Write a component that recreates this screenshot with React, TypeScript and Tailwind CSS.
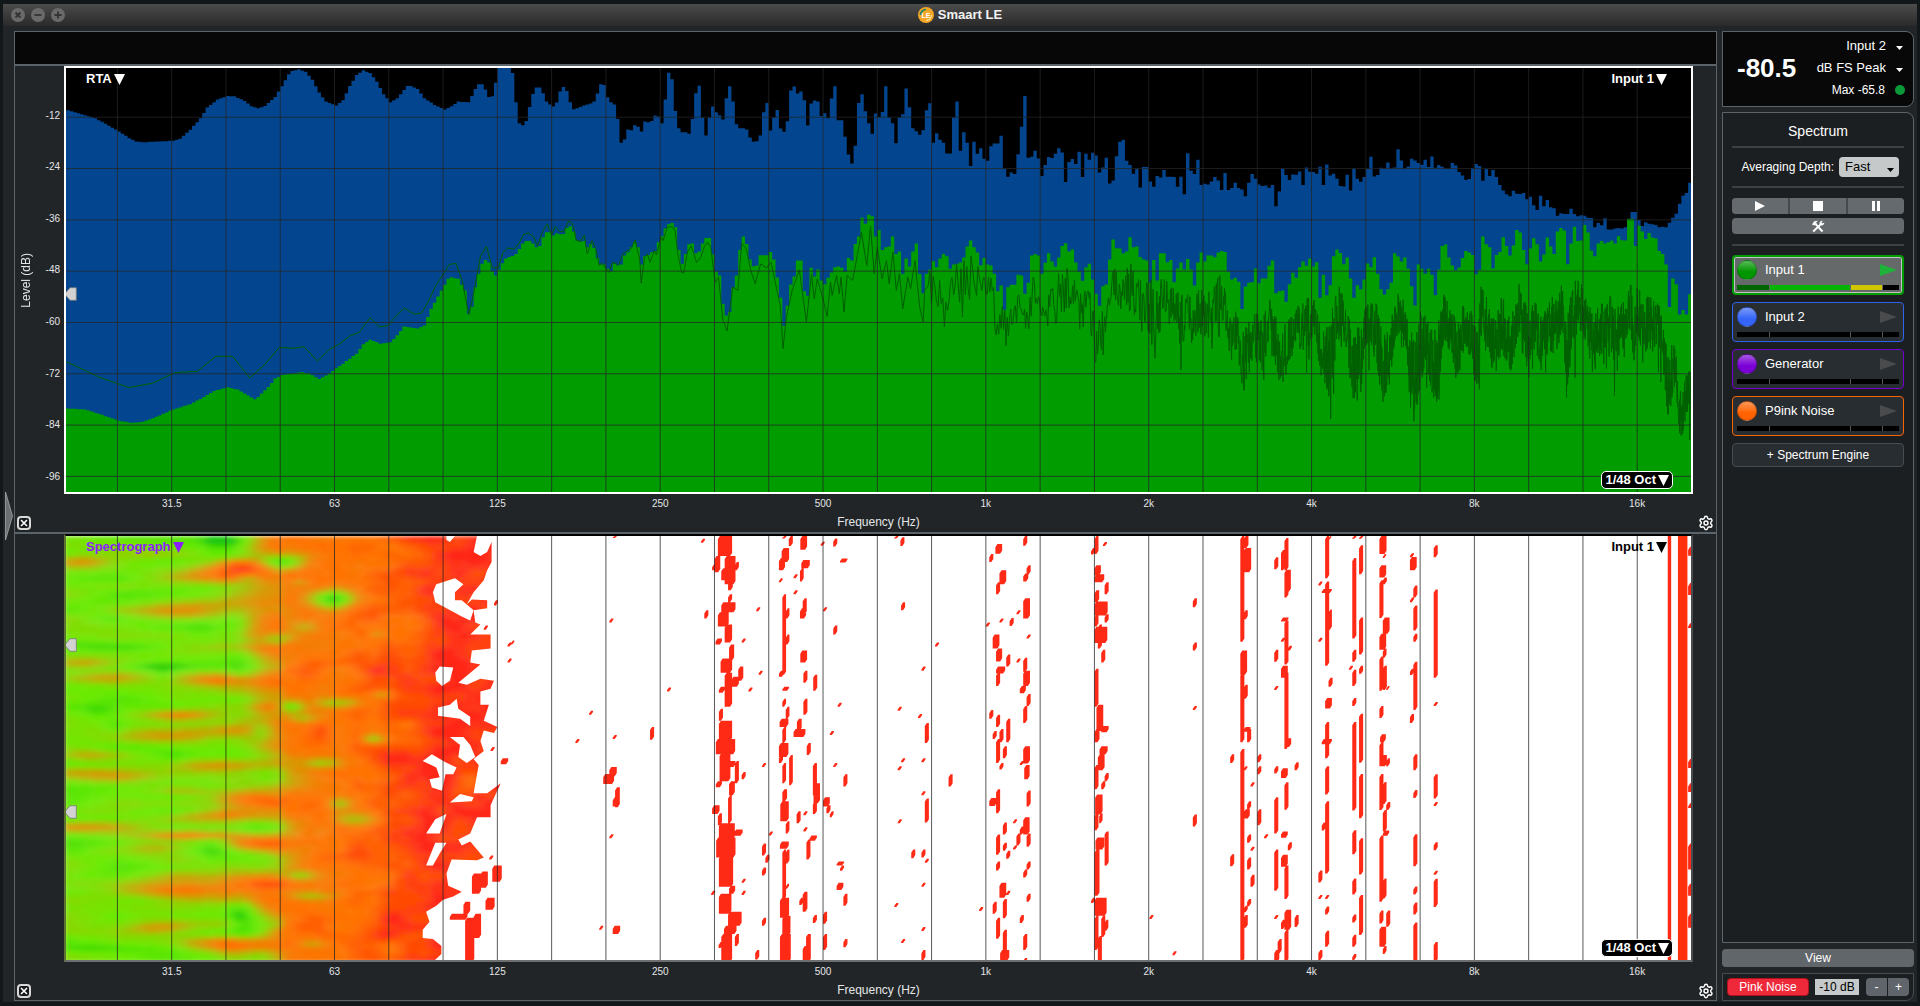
import { useMemo } from "react";
import type { ReactNode } from "react";
import { Settings } from "lucide-react";

// One column is 1/48 octave wide, both plots span the same columns
const COLS = 479;
const ROWS = 105.5;
const LEVEL_TOP = 21;
const LEVEL_SPAN = 1275;

const FREQ_LABELS = ["31.5", "63", "125", "250", "500", "1k", "2k", "4k", "8k", "16k"];
const LEVEL_LABELS = ["-12", "-24", "-36", "-48", "-60", "-72", "-84", "-96"];
const GRID_COLS = Array.from({ length: 29 }, (_, i) => 15 + 16 * i);
const GRID_LEVELS = Array.from({ length: 8 }, (_, i) => 169 + 154.3 * i);

type Point = [number, number];

const PEAK_CURVE: Point[] = [
  [0, 148], [8, 172], [15, 212], [18, 232], [20, 242], [22, 244], [31, 240], [33, 234], [36, 207], [39, 172],
  [41, 140], [44, 116], [47, 105], [49, 106], [52, 120], [54, 136], [56, 142], [58, 135], [61, 108], [63, 76],
  [65, 40], [66, 30], [68, 25], [70, 32], [72, 56], [74, 95], [76, 122], [79, 134], [81, 118], [83, 75],
  [85, 42], [87, 28], [89, 36], [91, 62], [93, 100], [95, 124], [97, 112], [100, 75], [101, 75], [103, 84],
  [105, 112], [108, 132], [111, 146], [113, 136], [115, 122], [118, 124], [119, 105], [120, 84], [121, 70],
  [122, 70], [123, 86], [124, 108], [125, 106], [126, 65],
];

const PEAK_BARS: number[][] = [
  [127, 15, 15, 15, 15, 36, 124, 187, 193, 180, 138, 99, 80, 80, 97, 122, 131, 137, 125, 92, 78, 90, 124, 145, 142, 138, 134, 131, 128, 122, 98, 70, 72, 109, 124, 131, 174, 246, 236, 206, 208, 193, 198],
  [169, 212, 182, 184, 180, 164, 167, 187, 116, 35, 55, 150, 202, 214, 214, 219, 174, 97, 74, 170, 224, 170],
  [190, 137, 154, 163, 176, 112, 76, 122, 190, 202, 202, 206, 230, 243, 241, 224, 154, 126, 209, 170, 147, 203],
  [211, 213, 181, 89, 77, 98, 92, 118, 194, 128, 119, 122, 165, 157, 172, 113, 76, 178, 178, 228, 281, 308],
  [232, 255, 126, 100, 151, 187, 219, 158, 168, 153, 76, 170, 187, 247, 170, 160, 83, 139, 202, 211, 222, 208],
  [253, 148, 127, 246, 217, 237, 246, 278, 278, 170, 122, 270, 214, 246, 316, 243, 279, 262, 294, 300, 256, 248, 248],
  [275, 225, 324, 348, 335, 340, 280, 198, 105, 291, 288, 270, 293, 346, 313, 289, 292, 279, 262, 275, 364, 304],
  [296, 295, 310, 273, 349, 279, 297, 276, 284, 335, 320, 291, 368, 359, 286, 243, 237, 300, 313, 339, 324, 380],
  [317, 319, 319, 362, 378, 346, 350, 328, 348, 348, 349, 378, 348, 401, 277, 330, 340, 297],
  [334, 373, 369, 371, 362, 349, 359, 388, 337, 388, 382, 366, 382, 386, 407, 366, 340, 354, 371, 376, 374],
  [354, 381, 373, 437, 392, 323, 343, 358, 341, 342, 332, 373, 320, 333, 334, 339, 318, 373, 311, 344, 339],
  [374, 354, 376, 377, 342, 389, 323, 354, 363, 349, 325, 288, 347, 343, 321, 323, 305, 323, 320, 265, 299],
  [394, 323, 317, 294, 299, 307, 312, 297, 319, 287, 321, 313, 318, 324, 325, 307, 314, 334, 344, 358, 355],
  [414, 322, 310, 316, 360, 325, 346, 328, 349, 373, 389, 401, 407, 390, 399, 400, 397, 416, 408, 434, 448],
  [434, 405, 437, 418, 440, 443, 465, 458, 460, 460, 444, 460, 467, 464, 465, 471, 472, 500, 487, 494, 473],
  [454, 507, 507, 504, 502, 504, 500, 480, 454, 454, 478, 496, 485, 489, 491, 493, 500, 498, 500, 486, 471],
  [474, 459, 429, 405, 397, 366],
];

const LIVE_CURVE: Point[] = [
  [0, 1045], [5, 1048], [10, 1064], [15, 1082], [19, 1088], [22, 1085], [26, 1070], [31, 1048], [36, 1032],
  [39, 1016], [43, 992], [47, 981], [50, 988], [53, 1006], [55, 1017], [56, 1010], [59, 980], [61, 955],
  [63, 944], [69, 936], [71, 940], [74, 956], [76, 946], [80, 917], [85, 880], [87, 852], [89, 838], [92, 850],
  [95, 846], [97, 825], [99, 798], [103, 804], [105, 795], [107, 745], [110, 690], [112, 655], [113, 650],
  [115, 655], [117, 690], [118, 760],
];

const LIVE_BARS: number[][] = [
  [119, 740, 680, 640, 610, 598, 606, 632, 645, 628, 608, 594, 589, 586, 580, 565, 549, 541, 541, 549, 560, 556, 530, 515, 515, 525],
  [144, 518, 521, 520, 502, 497, 513, 540, 543, 541, 560, 550, 562, 592, 612, 612, 625, 632, 610, 615, 612, 585, 575, 560, 545, 560],
  [169, 612, 586, 583, 575, 572, 545, 527, 504, 491, 487, 500, 568, 610, 580, 551, 549, 578, 573, 549, 532, 532],
  [190, 582, 633, 645, 731, 765, 755, 681, 645, 568, 528, 550, 597, 617, 615, 584, 584, 584, 574, 597, 651, 712],
  [211, 796, 736, 672, 648, 600, 600, 692, 706, 622, 648, 627, 660, 671, 652, 636, 620, 618, 622, 634, 592, 600],
  [232, 550, 528, 471, 489, 462, 467, 528, 508, 568, 560, 558, 528, 580, 573, 640, 594, 618, 573, 549, 640, 698],
  [253, 640, 627, 602, 620, 594, 580, 587, 625, 612, 610, 606, 591, 558, 540, 560, 576, 614, 592, 612, 615, 640, 692],
  [275, 675, 748, 680, 673, 673, 643, 645, 700, 667, 585, 580, 585, 640, 607, 578, 603, 618, 591, 556, 548, 573],
  [296, 567, 606, 633, 661, 621, 610, 657, 700, 736, 677, 672, 597, 537, 563, 564, 578, 573, 530, 560, 558, 589],
  [317, 597, 600, 667, 598, 660, 578, 578, 605, 598, 665, 624, 606, 627, 595, 627, 675, 606],
  [334, 576, 603, 585, 585, 590, 576, 571, 574, 633, 657, 652, 664, 746, 678, 667, 665, 624, 668, 654, 654],
  [354, 616, 600, 698, 692, 690, 724, 671, 637, 652, 620, 603, 616, 594, 618, 605, 712, 643, 704, 674, 587],
  [374, 567, 577, 611, 591, 654, 712, 674, 686, 657, 609, 620, 590, 640, 686, 702, 686, 667, 578, 588, 603],
  [394, 591, 625, 677, 735, 612, 625, 640, 625, 643, 704, 627, 556, 552, 591, 615, 629, 621, 592, 571, 576],
  [414, 583, 641, 628, 528, 551, 560, 624, 583, 574, 530, 556, 585, 555, 508, 516, 568, 611, 564, 533, 551],
  [434, 603, 582, 531, 558, 580, 513, 502, 510, 611, 549, 498, 541, 540, 493, 516, 570, 587, 549, 541, 549],
  [454, 545, 540, 549, 527, 539, 540, 474, 474, 556, 495, 513, 535, 517, 531, 534, 571, 580, 612, 740, 654],
  [474, 671, 762, 749, 762, 701],
];

const FFT_CURVE: Point[] = [
  [0, 905], [1, 909], [9.5, 950], [18.4, 982], [25.3, 969], [32, 937], [38.6, 933], [44, 888], [49, 888], [54, 953],
  [58.5, 912], [62.7, 861], [66.7, 864], [70, 859], [74, 902], [77.6, 866], [80.3, 852], [83.6, 826], [86.3, 816],
  [89.5, 772], [92.2, 799], [94.8, 796], [97, 768], [99.6, 743], [102.4, 761], [104.5, 759], [106.3, 730],
  [108.8, 676], [111.4, 635], [112.8, 612], [114.8, 608], [116.6, 660], [118.6, 763], [120, 700], [122, 588],
  [123.8, 557], [125.5, 622], [127.3, 622], [128.6, 577], [130.1, 562], [131.9, 566], [133.4, 548], [134.7, 522],
  [136.1, 517], [137.7, 528], [138.8, 557], [140.4, 512], [141.7, 490], [143, 523], [144, 498], [145.4, 512],
  [146.6, 514], [148, 481], [149.2, 490], [150.3, 540], [151.5, 542], [152.6, 524], [153.5, 580], [154.9, 540],
  [156, 565], [157, 614], [157.9, 608], [159.9, 636], [161, 605], [162.8, 613], [164, 580], [166.4, 565],
  [167.6, 538], [169, 600], [169.4, 668], [170.4, 590], [171.2, 580], [172, 605], [173.3, 570], [173.9, 583],
  [175.2, 530], [175.9, 540], [177, 500], [178.5, 498], [179.4, 510], [180.2, 580], [181.3, 636], [182, 636],
  [183, 575], [184.2, 556], [185.7, 606], [187, 590], [188, 558], [189, 546], [189.9, 560], [191.2, 666],
  [192.2, 650], [193.5, 780], [194.7, 812], [196.4, 680], [197.9, 690], [199, 548], [200.4, 565], [201.7, 630],
  [203, 670], [204.6, 610], [206.3, 622], [207.7, 605], [208.9, 665], [210.4, 735], [211.2, 865], [212.2, 770],
  [213.9, 690], [216, 628], [218.1, 785], [219.6, 640], [220.4, 715], [221.3, 655], [223, 715], [224.2, 768],
  [225.2, 665], [225.7, 705], [227, 645], [227.8, 700], [228.3, 650], [229.2, 755], [230.1, 645], [231.7, 660],
  [233, 590], [234.3, 515], [235.9, 615], [237, 497], [238.1, 640], [239, 560], [240.4, 655], [241.7, 600],
  [242.5, 670], [243.6, 575], [244.6, 690], [245.5, 640], [246.5, 745], [248, 650], [248.8, 685], [250.1, 600],
  [251.5, 740], [252.5, 785],
];

// column, upper and lower bound of the raw FFT trace
const FFT_RANGE: [number, number, number][] = [
  [253.5, 640, 700], [255, 630, 720], [260, 640, 740], [264, 590, 760], [266, 570, 700], [268, 600, 720],
  [271, 620, 780], [274, 690, 810], [276, 740, 860], [279, 750, 820], [281, 700, 790], [283, 730, 860],
  [285, 650, 720], [287, 660, 780], [289, 660, 780], [291, 680, 800], [294, 615, 740], [296, 650, 740],
  [299, 700, 800], [301, 680, 800], [303, 760, 900], [306, 740, 900], [308, 630, 700], [311, 640, 740],
  [314, 620, 740], [316, 660, 780], [319, 660, 830], [321, 680, 880], [323, 660, 760], [326, 690, 790],
  [329, 720, 880], [330, 680, 800], [332, 740, 850], [335, 670, 800], [338, 680, 870], [340, 660, 810],
  [342, 700, 800], [343, 760, 890], [345, 760, 860], [347, 830, 1000], [349, 760, 900], [351, 770, 890],
  [353, 770, 900], [355, 720, 820], [357, 800, 950], [359, 800, 950], [362, 760, 860], [365, 720, 860],
  [368, 730, 830], [370, 830, 950], [372, 800, 1000], [375, 690, 840], [377, 740, 850], [379, 820, 1000],
  [381, 810, 1020], [383, 740, 850], [386, 740, 880], [388, 830, 1010], [390, 820, 950], [392, 700, 820],
  [395, 740, 870], [397, 830, 1100], [399, 760, 950], [401, 790, 930], [404, 830, 1020], [406, 700, 820],
  [408, 760, 880], [410, 800, 960], [412, 730, 850], [414, 750, 880], [416, 820, 1000], [417, 680, 820],
  [419, 730, 860], [421, 790, 960], [423, 720, 860], [426, 780, 920], [428, 670, 820], [431, 780, 940],
  [432, 710, 830], [435, 790, 930], [437, 720, 850], [439, 730, 870], [441, 680, 800], [442, 800, 1000],
  [444, 680, 830], [447, 670, 800], [450, 790, 930], [452, 740, 870], [455, 720, 850], [456, 760, 900],
  [459, 730, 850], [461, 670, 790], [462, 780, 900], [463, 680, 820], [465, 740, 860], [467, 710, 850],
  [470, 760, 880], [471, 810, 960], [472, 900, 1070], [474, 840, 960], [475, 950, 1080], [476, 1000, 1130],
  [478, 930, 1040],
];

function lerpAt(points: number[][], x: number, field = 1) {
  let i = 0;
  while (i < points.length - 2 && points[i + 1][0] < x) i++;
  const a = points[i];
  const b = points[i + 1];
  const t = Math.min(1, Math.max(0, (x - a[0]) / (b[0] - a[0])));
  return a[field] + (b[field] - a[field]) * t;
}

function noise(n: number) {
  const s = Math.sin(n * 127.1 + 11.7) * 43758.5453;
  return s - Math.floor(s);
}

function barsPath(curve: Point[], chunks: number[][]) {
  const values: number[] = [];
  const last = curve[curve.length - 1][0];
  for (let k = 0; k <= last; k++) values[k] = Math.round(lerpAt(curve, k));
  chunks.forEach(([start, ...list]) => list.forEach((v, i) => (values[start + i] = v)));
  let d = `M-1 1300V${values[0]}`;
  for (let k = 0; k < COLS; k++) d += `V${values[k]}H${k + 1}`;
  return d + "V1300Z";
}

function fftPath() {
  let d = FFT_CURVE.map(([x, y], i) => `${i ? "L" : "M"}${x} ${y}`).join("");
  let x = 253;
  let n = 0;
  while (x < COLS) {
    const top = lerpAt(FFT_RANGE, x, 1);
    const range = lerpAt(FFT_RANGE, x, 2) - top;
    // a few bins drop well below the rest
    const dip = noise(n + 900) > 0.965 ? range * 0.9 * noise(n + 400) : 0;
    d += `L${x.toFixed(2)} ${Math.round(top - range * 0.12 + range * 1.25 * noise(n) + dip)}`;
    x += Math.max(0.07, 0.5 * Math.pow(2, (253 - x) / 48));
    n++;
  }
  return d;
}

// ---- spectrograph ----

const HEAT_BASE: Point[] = [
  [0, 0.26], [25, 0.25], [42, 0.3], [50, 0.46], [57, 0.62], [65, 0.73], [80, 0.76], [92, 0.82], [100, 0.9],
  [108, 0.98], [128, 0.97],
];

const HEAT_COLORS: number[][] = [
  [0, 30, 200, 10], [0.15, 84, 228, 0], [0.25, 106, 234, 0], [0.4, 138, 214, 0], [0.5, 178, 180, 0],
  [0.6, 216, 150, 0], [0.7, 246, 122, 0], [0.78, 255, 114, 0], [0.9, 255, 76, 4], [1, 255, 40, 24],
];

// column, row, column radius, row radius, change
const HEAT_SPOTS: number[][] = [
  [46, 1, 5, 1, -0.3], [5, 10, 12, 1, -0.12], [12, 20, 5, 1, -0.12], [40, 23, 5, 2, -0.15], [14, 27, 14, 1.2, -0.25],
  [27, 32, 9, 1, -0.2], [28, 34, 3, 1.5, -0.15], [9, 43, 5, 1.5, -0.15], [14, 47, 3, 1.5, -0.15], [31, 55, 5, 2, -0.08],
  [43, 77, 5, 2.5, -0.2], [1, 78, 5, 1, -0.2], [19, 90, 8, 1, -0.15], [14, 94, 5, 1, -0.12], [51, 94, 4, 4, -0.3],
  [3, 102, 12, 1, -0.2], [63, 6, 6, 1.7, -0.55], [78, 15, 5, 2, -0.7], [53, 10, 4, 1, -0.25], [68, 11, 3, 0.8, -0.25],
  [62, 25, 4, 1.3, -0.3], [70, 22, 4, 1.3, -0.25], [66, 42, 4, 1.2, -0.45], [80, 41, 6, 1.2, -0.4], [69, 45, 4, 1, -0.25],
  [92, 39, 3, 1, -0.3], [90, 50, 3, 1, -0.4], [57, 48, 3, 2, -0.25], [60, 59, 7, 4, -0.35], [75, 56, 5, 1.2, -0.35],
  [85, 70, 5, 1.5, -0.3], [80, 66, 3, 1.2, -0.3], [68, 84, 4, 1, -0.35], [72, 89, 6, 1, -0.3], [57, 72, 9, 3, -0.38],
  [58, 79, 8, 4, -0.35], [56, 97, 6, 3, -0.3], [57, 104, 5, 2, -0.25], [72, 101, 4, 1, -0.25], [51, 32, 5, 4, -0.25],
  [91, 24, 2, 0.8, -0.25], [49, 22, 4, 4, -0.2], [48, 1, 7, 5, -0.2], [51, 42, 5, 2, -0.2], [51, 54, 7, 3, -0.2],
  [4, 6, 8, 1.5, 0.3], [33, 18, 13, 2, 0.42], [47, 9, 11, 2, 0.4], [52, 7, 9, 1.5, 0.3], [4, 31, 9, 1.2, 0.28],
  [7, 35, 14, 1.3, 0.3], [44, 35, 9, 1.5, 0.38], [34, 44, 13, 1.2, 0.32], [31, 49, 13, 1.8, 0.38], [4, 54, 9, 1.4, 0.34],
  [9, 59, 18, 1.5, 0.27], [45, 57, 12, 1.5, 0.32], [33, 63, 9, 1, 0.25], [52, 65, 11, 2, 0.3], [45, 69, 12, 1.2, 0.3],
  [8, 72, 18, 1.5, 0.27], [38, 74, 13, 0.9, 0.38], [26, 77, 10, 1.8, 0.34], [56, 76, 9, 1.8, 0.48], [32, 87, 14, 2.5, 0.47],
  [54, 86, 11, 2, 0.28], [27, 97, 9, 1.5, 0.33], [45, 101, 13, 1.6, 0.4], [93, 32, 6, 4, 0.14], [95, 54, 4, 3, 0.14],
  [94, 97, 5, 6, 0.14], [72, 33, 5, 2, 0.1], [74, 48, 4, 2, 0.12], [70, 97, 5, 2, 0.1], [86, 78, 8, 3, 0.1],
  [101, 4, 8, 3, -0.1], [102, 21, 6, 4, -0.08], [101, 26, 6, 2, -0.12], [100, 48, 5, 3, -0.1], [118, 61, 3, 3, -0.12],
  [95, 102, 4, 2, -0.12], [46, 47, 9, 1.5, 0.14], [47, 27, 10, 1, 0.16], [30, 10, 12, 2, 0.14], [20, 4, 10, 1.5, 0.1],
];

// gaps below the display threshold
const HEAT_GAPS = [
  "112,0 114.5,0 113,1.5 112,1",
  "109,12 114.5,10.5 117,12 114.5,14 114.5,16 116.5,16 120,18.5 119,21 116.5,20 112,18 108.7,16.5 108,14",
  "108.7,34 110,32.5 114,32.7 113,36 110.7,37.3 109,36",
  "109.5,42.7 113,42 115,40.5 115.5,43 119,45 119,47.3 116,45.5 109.5,44.7",
  "113,50 117,50 119,52 120.5,55 118,56.5 115.5,55 116,52",
  "105,56 107.7,54.3 111.7,56.3 115,57.6 114,59.3 111.7,59.3 110.7,63.4 107.7,62.6 107,60.5 110,60 109,57.6",
  "113,66.3 116,64.2 120,65 119.5,66",
  "106,74 108.7,70.5 112,69.2 110,74",
  "106,82 108.7,76.3 112,76.3 110,79 108,82",
  "121,0 120,4 122,5 124,4 125.3,1.5 125.3,6.5 124,8.5 123,11 120,14 118,17 119.5,15.8 124,16 124,18 120,18.5 120.5,21.5 122,22 119,24.5 125,24.5 125,28 119.5,28.5 119,31.5 122,32 115.5,36.5 118,37 122,35.5 126,36 125,38 122,38.7 122,42 124.5,42 123,46 127,47.5 126,49 123,48.4 122,51 123,53.5 120,55.5 121.5,57 120,64 124,64 128,61.5 125,67 125,70 121,70 119,74 115.5,75.5 116.5,77 119,76 123,80 121,80.7 113.5,80.5 112,84 112.5,87 116.5,88.5 114,89.7 111,90.5 109,92 106,93.5 107,96 105,98 105,100 108,100.3 110.5,102 110.5,104 108,106 132,106 132,0",
];

// column, row, width, height of everything over the threshold right of 125 Hz
const STREAKS: number[][] = [
  [117.5, 95, 2.5, 11], [120, 94, 2, 6], [113, 94, 5, 1.5], [117, 91, 1.8, 3], [123.5, 90, 2.5, 3], [119.5, 84, 2.5, 5],
  [122, 83.5, 2, 4], [125.5, 82, 2.6, 4], [126, 16, 1, 1.3], [130, 26.5, 1, 1], [131, 26, 0.8, 1], [130, 30.5, 1, 1],
  [128, 55.3, 2, 1.5], [125, 52.5, 1, 1], [123, 22.3, 1, 1], [116, 24.5, 2, 1], [124.6, 79.5, 1, 1],
  [192, 0, 4, 5], [191, 5, 1.5, 4], [190.3, 7, 1.5, 1.5], [194, 5, 3, 7], [193, 8, 1.5, 3], [195, 11, 1.2, 2.5],
  [197, 6.5, 1, 2], [195, 14.5, 1, 2], [193, 16.5, 4, 2.5], [192, 19, 3, 3.5], [194, 22, 2, 4.5], [191.3, 25.5, 1.7, 1.5],
  [195.3, 27, 1.3, 4], [192.8, 30.5, 3.2, 3.5], [194, 34, 2, 8.5], [196, 35, 2, 2.5], [198, 32.5, 1.3, 3.5],
  [192.3, 37.5, 1.5, 1.5], [192.3, 43, 1, 3], [192.3, 46, 3.7, 5], [191.4, 50.5, 5.5, 3.8], [192.5, 54, 3, 7],
  [197, 56, 1, 5.5], [195, 56, 2, 1.5], [191.4, 61, 1.6, 1.5], [195.3, 61, 1.5, 3.5], [195, 64.5, 0.9, 7],
  [190.3, 67, 2, 2.2], [192, 69, 1, 3], [192.3, 71.5, 4.5, 4], [191.5, 75, 5.5, 5], [192.3, 79.5, 4, 7.8],
  [196.8, 73, 2.3, 1.6], [195.3, 87, 1.6, 2], [192.3, 89, 3.5, 5], [195, 93.5, 3.8, 3.5], [193.8, 97, 3.5, 2],
  [193, 99, 3, 7], [197, 99, 1, 3], [192.2, 101, 1, 1.5],
  [210.8, 3, 2, 3.5], [212.9, 0, 1, 2.5], [210, 5.5, 1.6, 3], [210, 10.5, 0.9, 1], [211, 14.5, 0.9, 20],
  [212, 18, 0.9, 2.5], [212, 24.5, 0.9, 2.5], [210, 33.5, 1.3, 1.5], [211, 37.5, 1.8, 1], [211, 40.5, 0.9, 2],
  [212, 42.5, 0.9, 3], [210.2, 45.5, 2.4, 2], [211, 47.5, 0.9, 4], [210, 51.5, 2.6, 3.5], [210, 54.5, 1, 2],
  [213, 54.5, 0.9, 7.5], [211, 56.5, 0.9, 5], [211, 63, 1.2, 3], [210.4, 66, 2.3, 5], [212, 71, 0.9, 3],
  [210.3, 76, 2.4, 1.8], [211, 78, 0.9, 12.5], [212, 78, 0.9, 3.5], [212, 86.5, 0.8, 1.3], [210.3, 90, 2.5, 5],
  [211, 94.5, 2.2, 5], [210.3, 99, 3, 7], [211, 0, 1, 0.6],
  [216.3, 0, 1.8, 3.4], [216.6, 6, 2.3, 2], [216.2, 8, 0.9, 3.3], [214.3, 9.5, 1, 1], [214.3, 13.5, 1, 1],
  [217, 15.5, 1, 4], [216.2, 18, 1.6, 2.5], [216.3, 28.5, 1.8, 3], [217.2, 33.5, 1, 3], [220.1, 34.5, 1, 4],
  [217.2, 40.5, 1, 4], [215.3, 45.5, 1.2, 3], [214.3, 48, 3.3, 2], [218.2, 51.5, 1, 3], [220, 56.5, 1, 8],
  [220.2, 61.5, 1.7, 5], [220, 66, 1, 3.2], [215.2, 68.5, 1, 3], [217.2, 68.5, 1, 1], [217.2, 72.5, 1, 1],
  [219, 74.5, 2, 1.3], [218.1, 75.5, 1, 5], [217, 88.5, 1.2, 5], [216, 90, 1, 1.8], [220, 94.3, 1, 2],
  [218, 99, 1.2, 7], [217, 102, 1.5, 4],
  [161, 0, 1, 0.5], [187, 0.7, 1, 1], [222.3, 1.4, 1, 1], [226, 0.6, 1, 2], [228, 5.6, 2, 1], [160, 20.5, 1, 1],
  [188, 18.5, 1, 2], [203.3, 17.7, 1, 1], [199, 25.5, 1, 1], [204, 33.5, 1, 1], [201, 37.7, 1, 1], [177, 37.7, 1, 1],
  [154, 43.5, 1, 1], [150, 50.5, 1, 1], [161, 49.5, 1, 1], [172, 47.5, 1, 3.2], [158.2, 59.2, 3, 2.5],
  [160, 57.5, 2, 2.3], [161.7, 62.5, 1.2, 5], [161, 65, 1.7, 2.3], [160, 74.2, 1, 1], [157, 97, 1, 1], [161, 97, 2, 2],
  [199, 58.7, 1, 1.8], [205, 56.5, 1, 1], [207, 73.5, 1, 1], [205, 76.5, 1, 3], [206, 79.3, 1, 2], [205, 82.5, 1, 2],
  [199, 85.3, 1, 1], [199, 88.3, 1, 1], [190, 88.3, 1, 1], [205, 95, 1, 2], [203, 103, 1, 2.4], [223, 17.7, 1, 1],
  [226, 22.3, 1, 2.2], [227.3, 41.5, 1, 1], [225, 48.5, 1, 1], [226, 56.5, 1, 1], [229, 59.3, 1, 3], [223, 65, 1.8, 2.3],
  [224, 67, 1, 2], [225, 68.5, 0.9, 1.5], [227, 81, 2, 1], [228, 82, 1, 1.3], [227, 86.3, 1.8, 1.8], [229, 89, 1, 3],
  [223, 93.5, 1, 3], [223, 99, 1, 4], [229, 100.3, 1, 2], [245.8, 0.3, 1, 2.2], [244, 0, 1, 0.6], [246, 16.5, 1, 2],
  [256, 26.5, 1, 1], [252, 32.5, 1, 1], [245, 42.5, 1, 1], [251, 44.3, 1, 1], [253, 46.5, 1, 5], [246, 55.3, 1, 1],
  [245, 57.3, 1, 1], [252, 55.3, 1, 1], [260, 59.3, 1, 3], [252, 63.5, 1, 1], [253, 65.3, 1, 6], [245, 70.5, 1, 1],
  [249, 78, 1, 2.2], [252, 78, 1, 2], [253, 80.3, 1, 1], [252, 86.3, 1, 1], [244, 91.3, 1, 1], [269, 92.3, 1, 1],
  [252, 97.3, 1, 1], [246, 100.3, 1, 1], [252, 103, 1, 2.5],
  [273.8, 2, 1.8, 2.4], [272, 4.5, 1, 2], [275, 8.5, 1.8, 3.5], [274, 11.5, 1, 3], [271, 21.5, 1, 1], [275, 20.5, 1, 1],
  [278, 20.4, 1, 2], [273, 24.5, 1.8, 3.5], [274, 28, 1.6, 3.2], [277, 29.5, 1, 3], [274, 32.5, 2.5, 1.7],
  [274, 34, 1, 3.3], [272, 43.3, 1, 2.2], [274, 44.5, 1, 3], [277, 45.5, 1, 5.8], [273, 48.5, 1, 2], [275, 48, 1, 3.3],
  [274, 50.5, 1, 6], [276, 52.3, 1, 3], [275, 56.5, 1, 1.6], [274, 63, 1, 6], [272, 65.2, 2, 2], [276, 71.3, 1, 3],
  [274, 74.3, 1, 5], [276, 76.3, 1, 2], [277, 78.3, 1, 2], [274, 81, 1, 2.2], [275, 86.3, 1.8, 3.7], [277, 88.3, 1, 1],
  [276, 90.3, 1, 4.8], [273, 91, 1, 3], [274, 95, 1, 5.2], [276, 98, 1, 7.5], [275.2, 103, 2.5, 2.6],
  [282, 0, 1, 2.4], [283, 7.3, 1, 2.3], [282, 9.3, 1.3, 2], [282, 15.5, 1.8, 5], [280, 18.5, 1, 1], [283, 24.5, 1, 1],
  [280, 30.5, 1, 1], [282, 30.3, 1, 3.5], [282, 33.5, 1.8, 3.8], [281, 37.3, 1.6, 1.8], [283, 39.3, 1, 3],
  [282, 42.3, 1, 4.2], [282, 52.3, 1.8, 4.3], [281, 56, 1, 1], [282.3, 57, 1.4, 3.5], [283, 63.3, 1, 4],
  [279, 70.5, 1, 1], [282, 70, 1.7, 4.3], [281, 72.3, 1, 2], [283, 74, 1, 3.3], [280, 74, 1, 3], [279, 77, 1, 1],
  [283, 81, 1, 2], [282, 83, 1, 2], [283, 89, 1, 2], [281, 94.3, 1, 2], [282, 99, 1, 4], [282, 105, 1, 1],
  [303, 0, 1, 4.5], [302, 3, 1, 1.6], [305.5, 1.5, 1, 1], [303, 7.3, 1.7, 2.5], [303, 9.5, 2.7, 2], [306, 11.5, 1, 3],
  [303, 13.5, 1.2, 3], [303, 16.3, 3.7, 3.5], [303, 19.5, 1, 3], [306, 19.5, 1, 2], [303, 22.6, 3.6, 4], [304, 22, 1, 6],
  [305, 28.3, 1, 3.2], [303, 33, 1, 9.5], [303.6, 42, 1.8, 6.5], [303, 48, 1.3, 3.3], [305, 47.3, 2, 1.5],
  [304.5, 52.3, 2.2, 2], [304, 54.3, 1.8, 4], [303, 57, 1, 6], [306, 59, 1, 2], [305, 61, 1, 2], [303.2, 64.3, 2, 5],
  [303, 69, 1, 4.2], [304.4, 69, 0.8, 2.5], [303.3, 75, 2.4, 3], [306, 73.5, 1, 8.5], [303, 78, 1.3, 11.5],
  [303, 90, 3.4, 4.5], [302, 90, 1, 1.3], [303, 94.5, 1, 8.5], [305, 94.5, 1, 5.3], [306, 95.5, 0.9, 2.7],
  [304, 99.5, 1, 7], [319.2, 94.3, 1, 1],
  [332, 15.5, 1, 2.2], [332, 26.5, 1, 2], [332, 42.3, 1, 1], [332, 69.3, 1, 3], [326, 103.3, 1, 1], [346, 0, 1, 26.3],
  [347, 0, 1.2, 3], [347, 3, 2, 6], [347, 18.5, 1, 2.2], [346, 28.5, 1.8, 6], [346, 34, 1, 17.3], [347, 37, 1, 3.5],
  [347, 47.5, 1.8, 1.2], [348, 48, 1, 3.3], [346, 53, 1, 53], [347, 57.3, 0.9, 1], [348, 66, 1, 2], [347, 68, 1.6, 2.3],
  [348, 74.3, 1, 2], [349, 77.3, 1, 1], [348, 80, 1, 3], [349, 84.3, 1, 3], [348, 90.3, 1, 1.8], [347, 92, 1, 1.6],
  [347, 94.3, 1, 3.2], [343, 54.3, 1, 2.2], [351, 54.3, 1, 2], [351, 57.3, 1, 2], [349, 61.3, 1, 1], [351, 68, 1, 4],
  [353, 74.2, 1, 1], [343, 79.2, 1, 3],
  [359, 0.5, 1, 8], [358, 3.5, 1, 5], [356, 5.3, 1, 3], [359, 8.4, 1.7, 5.5], [359, 13, 1, 2.3], [358, 20.3, 2, 1],
  [359, 21, 1, 11], [358, 25.3, 1, 1], [360, 27.3, 1, 1.2], [356, 28.3, 1, 3], [358, 32.3, 1.8, 3], [356, 37.3, 1, 1],
  [359, 34, 1, 19], [359.3, 50.3, 1.5, 2.2], [362, 56.3, 1, 2], [356, 57.3, 1, 1.8], [358, 57.8, 1.8, 2.4],
  [359, 61.3, 1, 6.8], [356, 65, 1, 9], [358, 73.5, 1.8, 1.6], [360, 76.2, 1, 2], [356, 78, 1, 10.3],
  [358, 79.3, 1.8, 3], [359, 82, 1, 8.3], [356, 94.3, 1, 1], [359, 93, 1.8, 5], [358, 95.5, 1, 2.3], [362, 94.3, 1, 3],
  [357, 100.3, 1, 3.5], [359, 98, 1, 8], [356, 103, 1.3, 3],
  [371, 0, 1, 10.5], [372, 0, 0.6, 1], [369, 11.3, 1, 1], [370, 13.2, 2.8, 1], [371, 11.3, 1, 21], [372, 18.3, 0.8, 5],
  [369, 25.3, 1, 1], [372, 35.3, 1, 2.2], [371, 40.3, 1.8, 2.6], [371, 46.3, 1, 9], [370, 50.5, 2.8, 1.3],
  [371, 57.3, 1, 7], [371, 66, 1, 18], [370, 71.3, 1, 2], [369, 83.2, 1, 3], [369, 89.3, 1, 1], [371, 89.3, 1, 1],
  [371, 92.2, 1, 2], [371, 98.2, 1, 4], [369, 103, 1, 2.5],
  [379, 0, 1, 0.7], [379, 5.5, 1, 20], [379, 28.3, 1, 3], [378, 32.3, 1, 1], [379, 33.3, 1, 4], [379, 40.3, 1, 2],
  [379, 46.3, 1, 22], [379, 73.2, 1, 6], [379, 85.2, 1, 4], [379, 94.2, 1, 2], [379, 99.2, 1, 3], [379, 104, 1, 1.5],
  [381, 0, 1, 0.7], [381, 2.3, 1, 7.2], [381, 20.3, 1, 9.2], [381, 32.3, 1, 2], [381, 44.2, 1, 12.2],
  [381, 59.2, 1, 11], [381, 75.2, 1, 9], [381, 89.3, 1, 10],
  [387, 0, 1.9, 4.5], [388, 4.5, 0.8, 1], [387, 7.3, 1.8, 3], [388, 10.3, 1, 1.7], [387, 11, 1, 9.4], [388, 20.3, 1.8, 4],
  [387, 24.3, 1.8, 4], [388, 28, 0.9, 2.3], [387, 30, 1, 8.5], [388, 32.3, 1, 6], [389, 37.3, 0.8, 1], [387, 42.3, 1, 3],
  [387.2, 49.3, 1.5, 2], [387, 51.3, 1, 4], [387, 54.5, 2, 2.8], [389, 55.3, 0.9, 2], [387, 59.2, 1, 9],
  [388, 61.2, 0.9, 5.5], [389, 66.2, 1, 2], [388, 68.2, 1, 5.3], [388, 73.3, 1.7, 1.3], [387, 74.5, 1, 16.5],
  [388, 85.2, 0.9, 5], [387, 93.2, 1, 3.2], [389, 93.2, 1, 4], [387, 97.2, 1.8, 5], [388, 102, 0.9, 2],
  [396, 5.2, 1.8, 3.3], [396, 4.3, 1, 1], [397, 12.3, 1, 3], [396, 15.3, 1, 1.2], [397, 17.3, 1, 6.2], [397, 24.3, 1, 2],
  [397, 31.3, 1, 12], [396, 33, 1, 1.6], [396, 44.3, 1, 2.2], [397, 54.3, 1, 4], [397, 63.2, 1, 2], [397, 74.2, 1, 8],
  [397, 87.2, 1, 2], [397, 91.2, 1, 3], [397, 96.2, 1, 10],
  [403, 2.3, 1, 3], [403, 13.3, 1, 22], [403, 41.3, 1, 1], [403, 59.3, 1, 6], [403, 66.2, 1, 1], [403, 76.2, 1, 2],
  [403, 83.3, 1, 1], [403, 85.3, 1, 7], [403, 101, 1, 5],
  [478, 2.7, 1.5, 2.2], [478, 11.7, 1.5, 3], [478, 21.7, 1.5, 1.2], [478, 55.5, 1.5, 2.2], [478, 61.5, 1.5, 2.2],
  [478, 66.5, 1.5, 1.2], [478, 76.5, 1.5, 6.5], [478, 86.5, 1.5, 3], [478, 94, 1.5, 3.5],
];

function streaksPath() {
  return STREAKS.map(([x, y, w, h]) => {
    const cut = Math.min(0.8, h * 0.7);
    return `M${x} ${y + cut}L${x + 0.6} ${y}H${x + w + 0.2}V${y + h - cut}L${x + w - 0.4} ${y + h}H${x}Z`;
  }).join("");
}

function smoothNoise(x: number, y: number) {
  const ix = Math.floor(x);
  const iy = Math.floor(y);
  const fx = x - ix;
  const fy = y - iy;
  const at = (a: number, b: number) => noise(a * 3.17 + b * 57.3);
  const top = at(ix, iy) * (1 - fx) + at(ix + 1, iy) * fx;
  const bottom = at(ix, iy + 1) * (1 - fx) + at(ix + 1, iy + 1) * fx;
  return top * (1 - fy) + bottom * fy;
}

function heatColor(level: number) {
  const [r, g, b] = [1, 2, 3].map((f) => Math.round(lerpAt(HEAT_COLORS, level, f)));
  return `rgb(${r},${g},${b})`;
}

// groups the heat cells by quantised level, one path per colour
function heatLayers() {
  const steps = 32;
  const paths: string[] = Array.from({ length: steps + 1 }, () => "");
  for (let row = 0; row < 106; row++) {
    let start = -1;
    let current = -1;
    for (let col = -1; col <= 130; col++) {
      let v = lerpAt(HEAT_BASE, col);
      for (const [cx, cy, rx, ry, amount] of HEAT_SPOTS) {
        const dx = (col - cx) / rx;
        const dy = (row - cy) / ry;
        const q = dx * dx + dy * dy;
        if (q < 5) v += amount * Math.exp(-q * 0.8);
      }
      const grain = col < 64 ? smoothNoise(col / 16, row / 2) : smoothNoise(col / 5 + 40, row / 2.2);
      v += (grain - 0.5) * (col < 64 ? 0.26 : 0.15);
      const level = col === 130 ? -2 : Math.round(Math.min(1, Math.max(0, v)) * steps);
      if (level !== current) {
        if (current >= 0) paths[current] += `M${start} ${row}H${col}V${row + 1.05}H${start}Z`;
        start = col;
        current = level;
      }
    }
  }
  return paths.map((d, i) => ({ d, color: heatColor(i / steps) })).filter((p) => p.d);
}

function Caret({ className }: { className: string }) {
  return (
    <svg viewBox="0 0 11 11" preserveAspectRatio="none" className={className} aria-hidden="true">
      <path d="M0 0H11L5.5 11Z" fill="currentColor" />
    </svg>
  );
}

function SliderHandle({ className }: { className: string }) {
  return (
    <svg viewBox="0 0 13 14" className={`absolute -left-0.5 h-3.5 w-[13px] -translate-y-1/2 ${className}`} aria-hidden="true">
      <path d="M0.5 7L6 0.7H12.3V13.3H6Z" fill="#d2d2d2" stroke="#777" strokeWidth="0.8" />
    </svg>
  );
}

function PlotMenu({ label, className }: { label: string; className: string }) {
  return (
    <button type="button" className={`absolute flex items-center text-[13px] leading-4 font-bold ${className}`}>
      {label}
      <Caret className="ml-0.5 size-[11px]" />
    </button>
  );
}

function RtaPlot() {
  const peak = useMemo(() => barsPath(PEAK_CURVE, PEAK_BARS), []);
  const live = useMemo(() => barsPath(LIVE_CURVE, LIVE_BARS), []);
  const fft = useMemo(fftPath, []);
  return (
    <svg
      viewBox={`-0.15 ${LEVEL_TOP} ${COLS} ${LEVEL_SPAN}`}
      preserveAspectRatio="none"
      className="absolute inset-0 size-full"
      role="img"
      aria-label="RTA"
    >
      <path d={peak} fill="#03468f" />
      <path d={live} fill="#009c00" />
      <path d={fft} fill="none" stroke="#005f00" strokeWidth="1" vectorEffect="non-scaling-stroke" strokeLinejoin="round" />
      <g stroke="#262626" strokeOpacity="0.75" strokeWidth="1">
        {GRID_COLS.map((x) => (
          <path key={x} d={`M${x} 0V1300`} vectorEffect="non-scaling-stroke" />
        ))}
        {GRID_LEVELS.map((y) => (
          <path key={y} d={`M-1 ${y}H480`} vectorEffect="non-scaling-stroke" />
        ))}
      </g>
    </svg>
  );
}

function SpectrographPlot() {
  const layers = useMemo(heatLayers, []);
  const streaks = useMemo(streaksPath, []);
  return (
    <svg
      viewBox={`-0.15 0 ${COLS} ${ROWS}`}
      preserveAspectRatio="none"
      className="absolute inset-0 size-full"
      role="img"
      aria-label="Spectrograph"
    >
      <defs>
        <filter id="heat" x="-2%" y="-2%" width="104%" height="104%">
          <feGaussianBlur stdDeviation="0.9 0.5" />
        </filter>
        <filter id="edge" x="-2%" y="-2%" width="104%" height="104%">
          <feGaussianBlur stdDeviation="0.2 0.16" />
        </filter>
      </defs>
      <rect x="-1" y="0" width="481" height="106" fill="#fff" />
      <g filter="url(#heat)">
        {layers.map((layer) => (
          <path key={layer.color} d={layer.d} fill={layer.color} />
        ))}
      </g>
      <g filter="url(#edge)">
        {HEAT_GAPS.map((points) => (
          <polygon key={points} points={points} fill="#fff" />
        ))}
        <rect x="130" y="-1" width="8" height="108" fill="#fff" />
        <path d={streaks} fill="#ff2a18" />
        <rect x="472" y="-1" width="1" height="108" fill="#ff2a18" />
        <rect x="475" y="-1" width="2.8" height="108" fill="#ff3210" />
      </g>
      <g stroke="#222" strokeOpacity="0.75" strokeWidth="1">
        {GRID_COLS.map((x) => (
          <path key={x} d={`M${x} 0V106`} vectorEffect="non-scaling-stroke" />
        ))}
      </g>
    </svg>
  );
}

function FrequencyAxis() {
  return (
    <div className="min-w-0 overflow-visible px-0.5 text-[#e4e6e7]">
      <div className="flex h-5">
        <div className="w-[1.5%] shrink-0" />
        {FREQ_LABELS.map((label) => (
          <div key={label} className="w-[10.02%] shrink-0 text-center text-[10px] leading-5">
            {label}
          </div>
        ))}
      </div>
      <div className="text-center text-[12px] leading-4">Frequency (Hz)</div>
    </div>
  );
}

function LevelAxis() {
  return (
    <div className="flex min-h-0 pr-1 text-[#e4e6e7]">
      <div className="flex flex-1 items-center pl-0.5 text-[12px]">
        <span className="rotate-180 [writing-mode:vertical-rl]">Level (dB)</span>
      </div>
      <div className="flex flex-col text-right text-[10px] leading-3">
        <div className="h-[5.6%] shrink-0" />
        {LEVEL_LABELS.map((label) => (
          <div key={label} className="flex h-[12.05%] shrink-0 items-center justify-end">
            {label}
          </div>
        ))}
      </div>
    </div>
  );
}

function GraphPanel({ axis, children }: { axis?: ReactNode; children: ReactNode }) {
  return (
    <section className="grid min-h-0 flex-1 grid-cols-[49px_1fr_23px] grid-rows-[1fr_38px]">
      {axis ?? <div />}
      {children}
      <div />
      <div className="flex items-end pb-0.5 pl-0.5">
        <button
          type="button"
          aria-label="Close graph"
          className="flex size-3.5 items-center justify-center rounded-sm border-2 border-[#d8dada] bg-[#16181a]"
        >
          <svg viewBox="0 0 8 8" className="size-2" aria-hidden="true">
            <path d="M1 1L7 7M7 1L1 7" stroke="#fff" strokeWidth="1.6" />
          </svg>
        </button>
      </div>
      <FrequencyAxis />
      <div className="flex items-end justify-end pr-0.5 pb-px">
        <button type="button" aria-label="Graph settings" className="text-white">
          <Settings size={16} strokeWidth={2.2} />
        </button>
      </div>
    </section>
  );
}

function MeterReadout() {
  return (
    <section className="flex h-[76px] shrink-0 items-center rounded-r-lg border border-[#5b646b] bg-[#080808] pr-2 pb-0.5 pl-3.5 text-white">
      <output className="flex-1 text-[26px] leading-8 font-bold">-80.5</output>
      <div className="flex flex-col items-end">
        <label className="flex h-[22px] items-center">
          <select aria-label="Meter input" className="appearance-none bg-transparent text-right text-[13px] [text-align-last:right]">
            <option>Input 2</option>
          </select>
          <Caret className="mt-1 mr-0.5 ml-2.5 h-1 w-[7px]" />
        </label>
        <label className="flex h-[22px] items-center">
          <select aria-label="Meter scale" className="appearance-none bg-transparent text-right text-[13px] [text-align-last:right]">
            <option>dB FS Peak</option>
          </select>
          <Caret className="mt-1 mr-0.5 ml-2.5 h-1 w-[7px]" />
        </label>
        <div className="flex h-[22px] items-center gap-2.5 text-[12px]">
          Max -65.8
          <span className="size-2.5 rounded-full bg-[#0a9a3a]" />
        </div>
      </div>
    </section>
  );
}

const ENGINES = [
  { name: "Input 1", frame: "border-[#009c00]", ball: "bg-[#009600]", active: true },
  { name: "Input 2", frame: "border-[#3162ea]", ball: "bg-[#3465f8]", active: false },
  { name: "Generator", frame: "border-[#7400cc]", ball: "bg-[#7a00d6]", active: false },
  { name: "P9ink Noise", frame: "border-[#fb6300]", ball: "bg-[#ff6200]", active: false },
];

function EngineRow({ name, frame, ball, active }: (typeof ENGINES)[number]) {
  return (
    <button
      type="button"
      className={`relative flex h-10 flex-col rounded-sm px-1 pt-1 text-left text-white ${frame} ${
        active ? "border-2 bg-[#66696a] px-[3px] pt-[3px] inset-ring inset-ring-[#c2c4c4]" : "border bg-[#282d31]"
      }`}
    >
      <span className="flex h-5 w-full items-center">
        <span className={`size-5 rounded-full border border-black/20 bg-linear-to-b from-white/35 to-transparent to-60% ${ball}`} />
        <span className="ml-2 flex-1 text-[13px]">{name}</span>
        <svg viewBox="0 0 17 12" className="mr-0.5 h-3 w-[17px]" aria-hidden="true">
          <path d="M0 0L17 6L0 12Z" fill={active ? "#1fb23a" : "#4a4b4c"} />
        </svg>
      </span>
      <span className={`mt-[5px] flex h-[5px] w-full gap-px ${active ? "bg-[#66696a]" : "bg-[#55585a]"}`}>
        <span className={`flex-[32] ${active ? "bg-[#006400]" : "bg-black"}`} />
        <span className={`flex-[80] ${active ? "bg-[#00b400]" : "bg-black"}`} />
        <span className={`flex-[31] ${active ? "bg-[#d0c600]" : "bg-black"}`} />
        <span className="flex-[16] bg-black" />
      </span>
    </button>
  );
}

function SpectrumPanel() {
  return (
    <section className="mt-[5px] flex min-h-0 flex-1 flex-col rounded-tr-lg border border-[#5b646b] bg-[#1c1f21] px-[9px]">
      <h2 className="mt-2.5 text-center text-[14px] leading-4 text-white">Spectrum</h2>
      <div className="mt-[7px] h-0.5 bg-[#3c4146]" />
      <div className="flex h-[38px] items-center justify-end pr-[5px]">
        <label htmlFor="depth" className="mr-[5px] text-[12px] text-white">
          Averaging Depth:
        </label>
        <span className="relative">
          <select id="depth" className="block h-5 w-[60px] appearance-none rounded-sm bg-[#c5c9c9] pl-1.5 text-[13px] text-black">
            <option>Fast</option>
          </select>
          <Caret className="absolute top-[11px] right-[5px] h-1 w-[7px] text-black" />
        </span>
      </div>
      <div className="h-0.5 bg-[#3c4146]" />
      <div className="mt-2.5 flex gap-0.5 rounded-sm bg-[#454a4f] text-white">
        <button type="button" aria-label="Play" className="flex h-4 flex-1 items-center justify-center rounded-l-sm bg-[#656a6e]">
          <svg viewBox="0 0 10 10" className="size-2.5" aria-hidden="true">
            <path d="M0 0L10 5L0 10Z" fill="currentColor" />
          </svg>
        </button>
        <button type="button" aria-label="Stop" className="flex h-4 flex-1 items-center justify-center bg-[#656a6e]">
          <span className="size-2.5 bg-white" />
        </button>
        <button type="button" aria-label="Pause" className="flex h-4 flex-1 items-center justify-center gap-0.5 rounded-r-sm bg-[#656a6e]">
          <span className="h-2.5 w-[3px] bg-white" />
          <span className="h-2.5 w-[3px] bg-white" />
        </button>
      </div>
      <button type="button" aria-label="Tools" className="mt-1 flex h-4 items-center justify-center rounded-sm bg-[#656a6e]">
        <svg viewBox="0 0 14 13" className="h-[13px] w-3.5" aria-hidden="true">
          <path d="M11.5 11.5L4.2 3.6" stroke="#fff" strokeWidth="2" />
          <path d="M1 4.5L3.2 1.2L7 0.8L5.2 2.6L5.6 4L3.4 5.6Z" fill="#fff" />
          <path d="M2.2 11.5L9.4 4.6" stroke="#fff" strokeWidth="2" />
          <path d="M8.6 4.2C8.2 2.2 9.8 0.6 11.6 0.9L10.4 2.4L11.6 3.6L13.2 2.5C13.5 4.3 11.8 5.8 10 5.4Z" fill="#fff" />
        </svg>
      </button>
      <div className="mt-2.5 h-0.5 bg-[#3c4146]" />
      <div className="mt-[9px] flex flex-col gap-[7px]">
        {ENGINES.map((engine) => (
          <EngineRow key={engine.name} {...engine} />
        ))}
        <button type="button" className="h-6 rounded-sm border border-[#454c52] bg-[#282d31] text-[12px] text-white">
          + Spectrum Engine
        </button>
      </div>
    </section>
  );
}

function Generator() {
  return (
    <section className="mt-1.5 flex h-7 shrink-0 items-center rounded-br-lg border border-[#454c52] bg-[#1c1f21] pr-1 pl-1 text-[12px]">
      <button type="button" className="h-[18px] w-[82px] rounded-sm border border-[#b3101f] bg-[#ee2a3a] leading-4 text-white">
        Pink Noise
      </button>
      <input
        aria-label="Generator level"
        defaultValue="-10 dB"
        className="ml-1.5 h-4 w-11 min-w-0 bg-[#c5c9c9] text-center text-black"
      />
      <div className="ml-auto flex gap-px text-white">
        <button type="button" aria-label="Level down" className="h-[18px] w-[21px] rounded-l-sm bg-[#5f656a] leading-4">
          -
        </button>
        <button type="button" aria-label="Level up" className="h-[18px] w-[21px] rounded-r-sm bg-[#5f656a] leading-4">
          +
        </button>
      </div>
    </section>
  );
}

function TitleBar() {
  const dots = [
    { label: "Close", d: "M4.5 4.5L9.5 9.5M9.5 4.5L4.5 9.5" },
    { label: "Minimise", d: "M3.5 7H10.5" },
    { label: "Zoom", d: "M3.5 7H10.5M7 3.5V10.5" },
  ];
  return (
    <header className="grid h-[22px] shrink-0 grid-cols-[1fr_auto_1fr] items-center bg-gradient-to-b from-[#4c4c4c] to-[#2a2a2a] px-2">
      <div className="flex gap-1.5">
        {dots.map((dot) => (
          <button key={dot.label} type="button" aria-label={dot.label} className="size-3.5">
            <svg viewBox="0 0 14 14" aria-hidden="true">
              <circle cx="7" cy="7" r="7" fill="#6a6a6a" />
              <path d={dot.d} stroke="#333" strokeWidth="1.8" />
            </svg>
          </button>
        ))}
      </div>
      <h1 className="flex items-center gap-1 text-[13px] leading-4 font-bold text-[#f2f2f2]">
        <svg viewBox="0 0 16 16" className="size-4" aria-hidden="true">
          <circle cx="8" cy="8" r="8" fill="#f3a526" />
          <path d="M2.5 8A5.5 5.5 0 0 1 8 2.5" fill="none" stroke="#12806f" strokeWidth="1.6" />
          <path d="M13.5 8A5.5 5.5 0 0 1 8 13.5" fill="none" stroke="#ffd98a" strokeWidth="1.4" />
          <text x="8" y="11" fontSize="7" fontWeight="700" textAnchor="middle" fill="#fff">
            LE
          </text>
        </svg>
        Smaart LE
      </h1>
      <div />
    </header>
  );
}

export default function App() {
  return (
    <div className="flex h-screen flex-col border-x-[3px] border-y-4 border-[#12171a] bg-[#212528] font-['Liberation_Sans',Arial,sans-serif]">
      <TitleBar />
      <main className="flex min-h-0 flex-1 pt-[5px] pr-[3px] pb-px">
        <div className="flex w-[11px] shrink-0 items-center pl-0.5">
          <button type="button" aria-label="Show side panel">
            <svg viewBox="0 0 8 50" className="h-[50px] w-2" aria-hidden="true">
              <path d="M0.5 1L7.5 25L0.5 49Z" fill="#6c7072" stroke="#a4a8aa" strokeWidth="0.8" />
            </svg>
          </button>
        </div>

        <div className="flex min-w-0 flex-1 flex-col border border-[#5b646b]">
          <div className="h-8 shrink-0 bg-[#070707]" />
          <div className="h-0.5 shrink-0 bg-[#5b646b]" />
          <GraphPanel axis={<LevelAxis />}>
            <div className="relative overflow-hidden border-2 border-white bg-black text-white">
              <RtaPlot />
              <SliderHandle className="top-[53.4%]" />
              <PlotMenu label="RTA" className="top-[3px] left-5" />
              <PlotMenu label="Input 1" className="top-[3px] right-6" />
              <PlotMenu
                label="1/48 Oct"
                className="right-[18px] bottom-[3px] rounded-[5px] border border-white bg-black px-[3px]"
              />
            </div>
          </GraphPanel>
          <div className="h-0.5 shrink-0 bg-[#5b646b]" />
          <GraphPanel>
            <div className="relative overflow-hidden border-2 border-t-black border-r-[#4a4d4f] border-b-[#6c6e70] border-l-[#5c7430] bg-white text-black">
              <SpectrographPlot />
              <SliderHandle className="top-[25.8%]" />
              <SliderHandle className="top-[65.2%]" />
              <PlotMenu label="Spectrograph" className="top-[3px] left-5 text-[#8b1fff]" />
              <PlotMenu label="Input 1" className="top-[3px] right-6" />
              <PlotMenu
                label="1/48 Oct"
                className="right-[18px] bottom-[3px] rounded-[5px] border border-white bg-black px-[3px] text-white"
              />
            </div>
          </GraphPanel>
        </div>

        <aside className="ml-[5px] flex w-48 shrink-0 flex-col">
          <MeterReadout />
          <SpectrumPanel />
          <button type="button" className="mt-1.5 h-[18px] shrink-0 rounded-sm bg-[#61666a] text-[12px] leading-4 text-white">
            View
          </button>
          <Generator />
        </aside>
      </main>
    </div>
  );
}
